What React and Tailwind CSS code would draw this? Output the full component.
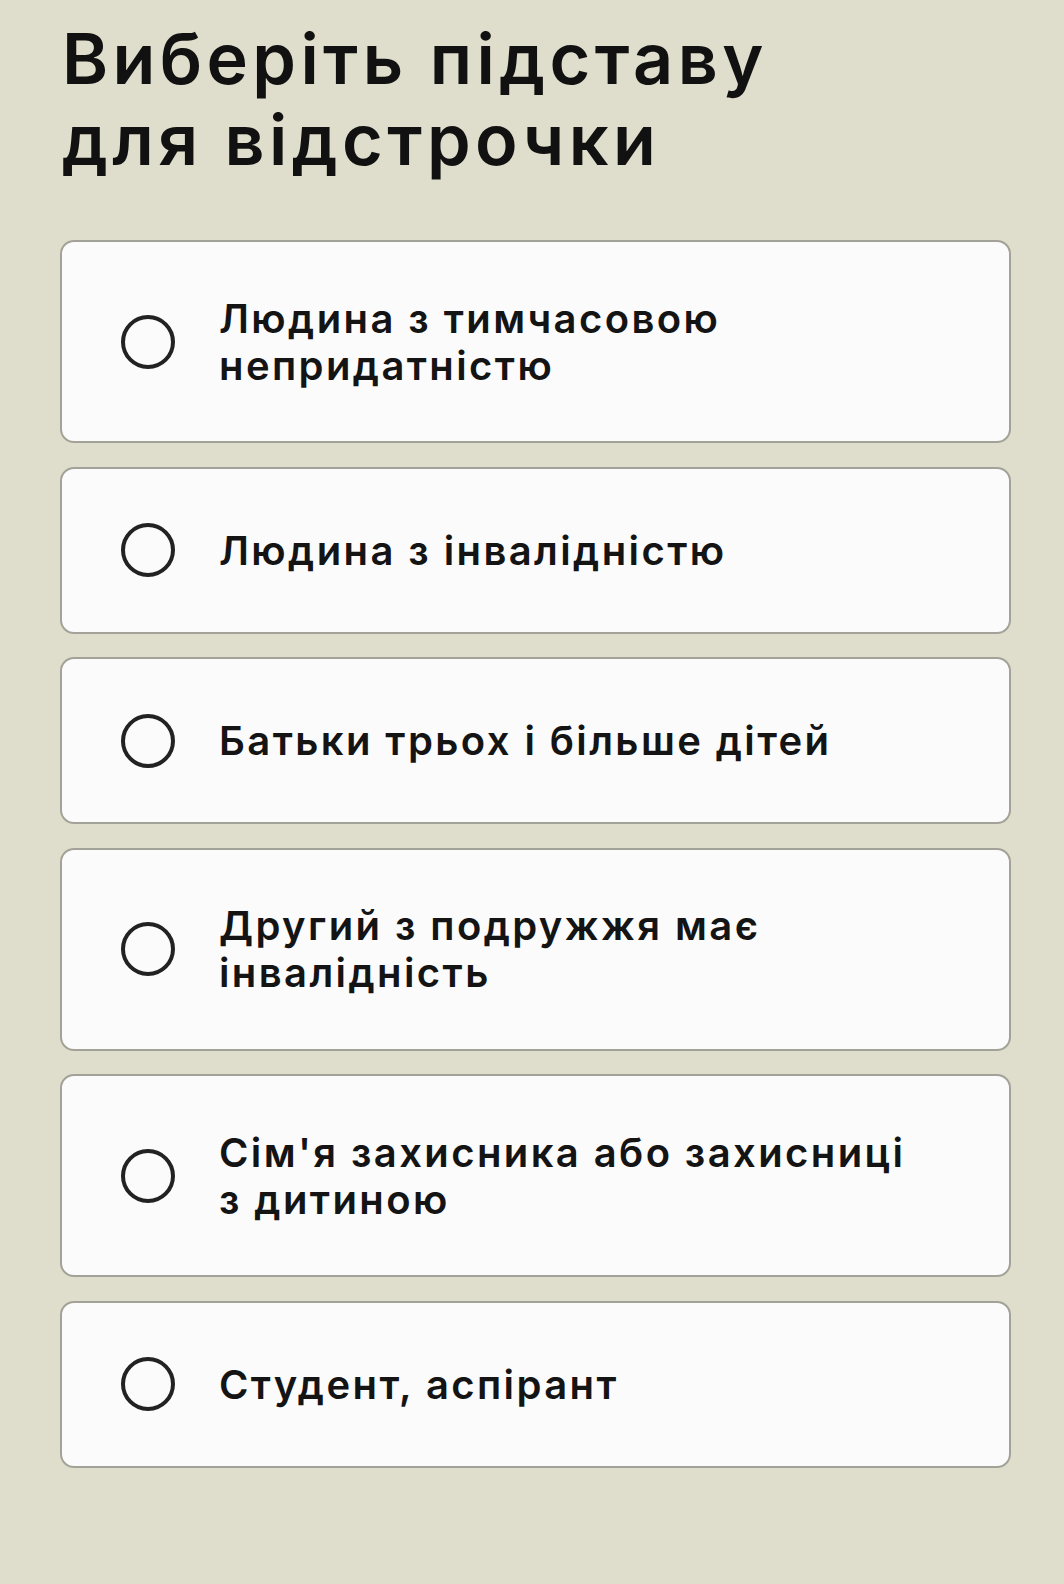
import React from "react";

const options = [
  ["Людина з тимчасовою", "непридатністю"],
  ["Людина з інвалідністю"],
  ["Батьки трьох і більше дітей"],
  ["Другий з подружжя має", "інвалідність"],
  ["Сім'я захисника або захисниці", "з дитиною"],
  ["Студент, аспірант"],
];

function Option({ lines }) {
  const two = lines.length > 1;
  return (
    <div
      className={`flex items-center rounded-[14px] border-2 border-[#a3a299] bg-[#fbfbfb] pl-[59px] ${two ? "h-[203px]" : "h-[167px]"}`}
    >
      <div className="h-[54px] w-[54px] shrink-0 rounded-full border-[4px] border-[#222222]" />
      <div className="ml-[44px] text-[40px] font-semibold leading-[47px] tracking-[2.4px] text-[#141414]">
        {lines.map((l, i) => (
          <div key={i}>{l}</div>
        ))}
      </div>
    </div>
  );
}

export default function App() {
  return (
    <div
      className="min-h-[1584px] w-[1064px] bg-[#dfddcb] pl-[60px] pr-[53px] pt-[18px]"
      style={{ fontFamily: "Inter, 'Noto Sans', sans-serif" }}
    >
      <h1 className="pl-[2px] text-[70px] font-semibold leading-[81px] tracking-[4.4px] text-[#111111]">
        Виберіть підставу
        <br />
        для відстрочки
      </h1>
      <div className="mt-[60px] flex flex-col gap-[23.5px]">
        {options.map((o, i) => (
          <Option key={i} lines={o} />
        ))}
      </div>
    </div>
  );
}
